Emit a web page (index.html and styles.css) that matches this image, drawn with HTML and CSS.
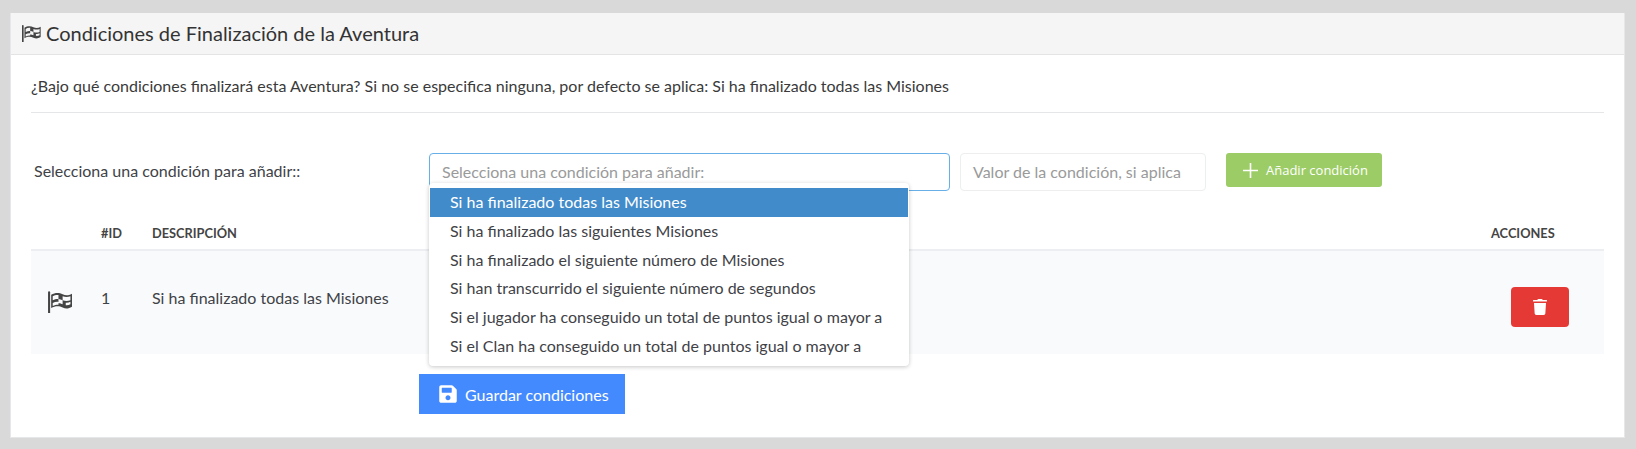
FILE: index.html
```html
<!DOCTYPE html>
<html lang="es">
<head>
<meta charset="utf-8">
<title>Condiciones</title>
<link rel="stylesheet" href="styles.css">
</head>
<body>
<section class="card">
  <header class="card-head">
    <svg class="flag flag-sm" viewBox="0 0 24 22"><use href="#flag"/></svg>
    <h1>Condiciones de Finalización de la Aventura</h1>
  </header>
  <div class="card-body">
    <p class="intro">¿Bajo qué condiciones finalizará esta Aventura? Si no se especifica ninguna, por defecto se aplica: Si ha finalizado todas las Misiones</p>
    <form class="add-row">
      <label class="add-label">Selecciona una condición para añadir::</label>
      <div class="select-wrap">
        <div class="select">Selecciona una condición para añadir:</div>
        <ul class="menu">
          <li class="active">Si ha finalizado todas las Misiones</li>
          <li>Si ha finalizado las siguientes Misiones</li>
          <li>Si ha finalizado el siguiente número de Misiones</li>
          <li>Si han transcurrido el siguiente número de segundos</li>
          <li>Si el jugador ha conseguido un total de puntos igual o mayor a</li>
          <li>Si el Clan ha conseguido un total de puntos igual o mayor a</li>
        </ul>
      </div>
      <div class="value">Valor de la condición, si aplica</div>
      <button type="button" class="btn-add">
        <svg class="plus" viewBox="0 0 15 15"><path d="M7.5 0v15M0 7.5h15"/></svg>
        <span>Añadir condición</span>
      </button>
    </form>
    <table class="grid">
      <thead>
        <tr>
          <th class="c-icon"></th>
          <th class="c-id">#ID</th>
          <th>DESCRIPCIÓN</th>
          <th class="c-act">ACCIONES</th>
        </tr>
      </thead>
      <tbody>
        <tr>
          <td class="c-icon"><svg class="flag flag-lg" viewBox="0 0 24 22"><use href="#flag"/></svg></td>
          <td class="c-id c-text">1</td>
          <td class="c-text">Si ha finalizado todas las Misiones</td>
          <td class="c-act">
            <button type="button" class="btn-del" aria-label="Eliminar">
              <svg viewBox="0 0 448 512"><path d="M432 32H312l-9.4-18.7A24 24 0 0 0 281.1 0H166.8a23.72 23.72 0 0 0-21.4 13.3L136 32H16A16 16 0 0 0 0 48v16a16 16 0 0 0 16 16h416a16 16 0 0 0 16-16V48a16 16 0 0 0-16-16zM53.2 467a48 48 0 0 0 47.9 45h245.8a48 48 0 0 0 47.9-45L416 128H32z"/></svg>
            </button>
          </td>
        </tr>
      </tbody>
    </table>
    <div class="save-row">
      <button type="button" class="btn-save">
        <svg viewBox="0 0 448 512"><path d="M433.941 129.941l-83.882-83.882A48 48 0 0 0 316.118 32H48C21.49 32 0 53.49 0 80v352c0 26.51 21.49 48 48 48h352c26.51 0 48-21.49 48-48V163.882a48 48 0 0 0-14.059-33.941zM224 416c-35.346 0-64-28.654-64-64 0-35.346 28.654-64 64-64s64 28.654 64 64c0 35.346-28.654 64-64 64zm96-304.52V212c0 6.627-5.373 12-12 12H76c-6.627 0-12-5.373-12-12V108c0-6.627 5.373-12 12-12h228.52c3.183 0 6.235 1.264 8.485 3.515l3.48 3.48A11.996 11.996 0 0 1 320 111.48z"/></svg>
        <span>Guardar condiciones</span>
      </button>
    </div>
  </div>
</section>
<svg class="defs" width="0" height="0">
  <symbol id="flag" viewBox="0 0 24 22">
    <path d="M1 2.2a1 1 0 0 1 2 0V22H1z"/>
    <path fill-rule="evenodd" d="M4 4.5C8 2 12 2.5 15 4c3 1.500 5.500 1.300 9-.5V16c-3.500 2-6 2.200-9 .7-3-1.500-7-1.900-11 .6zM5.500 6v3.800c2-1 4-1.400 5.500-1.200v3.800c1.500.2 3 .8 4 1.300V9.700c-1.300-.6-2.700-1-4-1.100V4.700C9 4.500 7 5 5.500 6zM15 9.700c2.500 1 5 1 7.500 0V6c-2.500 1-5 1-7.500 0zM5.500 12.500v2.800c2-1 3.800-1.300 5.500-1.200v-2.700c-2-.2-3.800.2-5.500 1.100zM18 14.500c1.700.2 3-.1 4.500-.9v-2.300c-1.500.7-3 1-4.500.8z"/>
  </symbol>
</svg>
</body>
</html>
```

FILE: styles.css
```css
* { box-sizing: border-box; }
html, body { margin: 0; height: 100%; }
body {
  background: #d9d9d9;
  padding: 13px 11px 11px 10px;
  font-family: Lato, "Open Sans", sans-serif;
  font-size: 16px;
  color: #3f4247;
  overflow: hidden;
}
.defs { position: absolute; }
.card {
  background: #fff;
  height: 425px;
  border: 1px solid #e6e7e9;
  border-top: 0;
}
.card-head {
  height: 42px;
  background: #f5f5f5;
  border-bottom: 1px solid #e4e4e4;
  display: flex;
  align-items: center;
  gap: 5px;
  padding: 0 0 1px 10px;
}
.card-head h1 {
  margin: 0;
  font-size: 20px;
  font-weight: 400;
  color: #333;
}
.flag { fill: #444; display: block; }
.flag-sm { width: 20px; height: 18px; }
.flag-lg { width: 25px; height: 23px; }
.card-body { padding: 0 20px; }
.intro {
  margin: 0;
  height: 58px;
  padding-top: 21px;
  line-height: 20px;
  color: #3a3a3a;
  border-bottom: 1px solid #e5e6e8;
}
.add-row {
  display: flex;
  align-items: flex-start;
  margin-top: 40px;
  height: 64px;
}
.add-label {
  width: 398px;
  padding-left: 3px;
  line-height: 36px;
}
.select-wrap { position: relative; width: 521px; margin-right: 10px; }
.select, .value {
  height: 38px;
  line-height: 36px;
  border-radius: 4px;
  color: #9a9a9a;
  background: #fff;
}
.select { border: 1px solid #66afe9; padding-left: 12px; }
.value { width: 246px; border: 1px solid #edeeef; padding-left: 12px; margin-right: 20px; }
.menu {
  position: absolute;
  z-index: 2;
  top: 30px;
  left: 0;
  width: 480px;
  height: 183px;
  margin: 0;
  padding: 5px 1px;
  list-style: none;
  background: #fff;
  border-radius: 4px;
  box-shadow: 0 1px 4px rgba(0, 0, 0, .22);
}
.menu li {
  height: 28.800px;
  line-height: 28.800px;
  padding-left: 20px;
  white-space: nowrap;
}
.menu li.active { background: #428bca; color: #fff; }
.btn-add {
  width: 156px;
  height: 34px;
  display: flex;
  align-items: center;
  gap: 8px;
  padding: 0 0 0 17px;
  background: #9ccc65;
  color: #fff;
  border: 0;
  border-radius: 3px;
  font: 13px "Open Sans", sans-serif;
}
.plus { width: 15px; height: 15px; stroke: #fff; stroke-width: 1.600; fill: none; }
.grid {
  width: 100%;
  border-collapse: collapse;
  table-layout: fixed;
}
.grid th {
  height: 33px;
  padding: 0;
  text-align: left;
  font-size: 12.800px;
  font-weight: 700;
  color: #444;
  border-bottom: 2px solid #eceef1;
}
.grid td {
  height: 104px;
  padding: 0;
  background: #f9fafc;
}
.grid .c-text { padding-bottom: 10px; }
.c-icon { width: 70px; padding: 0 0 2px 16px !important; }
.c-id { width: 51px; }
.c-act { width: 113px; }
.btn-del {
  display: flex;
  align-items: center;
  justify-content: center;
  width: 58px;
  height: 40px;
  margin: 8px 0 0 20px;
  background: #e53935;
  border: 0;
  border-radius: 4px;
}
.btn-del svg { width: 14px; height: 18px; fill: #fff; }
.save-row { padding: 20px 0 0 388px; }
.btn-save {
  width: 206px;
  height: 40px;
  display: flex;
  align-items: center;
  gap: 8px;
  padding: 0 0 0 20px;
  background: #448aff;
  color: #fff;
  border: 0;
  font: 16px Lato, sans-serif;
}
.btn-save svg { width: 18px; height: 20px; fill: #fff; }
```
